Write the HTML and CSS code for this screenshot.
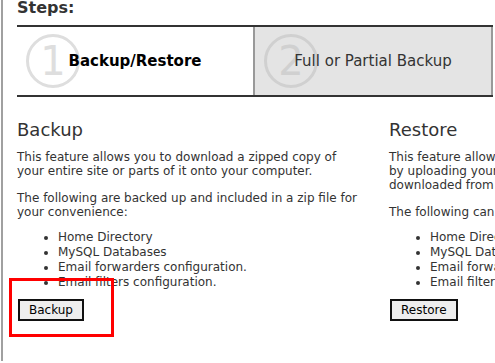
FILE: index.html
```html
<!DOCTYPE html>
<html lang="en">
<head>
    <meta charset="UTF-8">
    <title>Backup Wizard</title>
    <link rel="stylesheet" href="styles.css">
</head>
<body>
<div class="page">
    <h3 class="steps-title">Steps:</h3>

    <div class="steps">
        <div class="step current">
            <svg class="step-num" width="54" height="54" viewBox="0 0 54 54">
                <circle cx="27" cy="27" r="25.5" fill="none" stroke="#dedede" stroke-width="3"/>
                <text x="27" y="41" text-anchor="middle">1</text>
            </svg>
            <span class="step-label">Backup/Restore</span>
        </div>
        <div class="step next">
            <svg class="step-num" width="54" height="54" viewBox="0 0 54 54">
                <circle cx="27" cy="27" r="25.5" fill="none" stroke="#d0d0d0" stroke-width="3"/>
                <text x="27" y="41" text-anchor="middle">2</text>
            </svg>
            <span class="step-label">Full or Partial Backup</span>
        </div>
    </div>

    <div class="columns">
        <div class="col">
            <h2>Backup</h2>
            <p>This feature allows you to download a zipped copy of your entire site or parts of it onto your computer.</p>
            <p>The following are backed up and included in a zip file for your convenience:</p>
            <ul>
                <li>Home Directory</li>
                <li>MySQL Databases</li>
                <li>Email forwarders configuration.</li>
                <li>Email filters configuration.</li>
            </ul>
            <button class="btn">Backup</button>
        </div>
        <div class="col">
            <h2>Restore</h2>
            <p>This feature allows you to restore parts of a backup<br>by uploading your zip file(s) that you have previously<br>downloaded from the backup section.</p>
            <p>The following can be restored from a zip file:</p>
            <ul>
                <li>Home Directory</li>
                <li>MySQL Databases</li>
                <li>Email forwarders configuration.</li>
                <li>Email filters configuration.</li>
            </ul>
            <button class="btn">Restore</button>
        </div>
    </div>

    <div class="highlight"></div>
</div>
</body>
</html>
```

FILE: styles.css
```css
html, body {
    margin: 0;
    overflow: hidden;
    background: #fff;
}
body {
    font-family: "DejaVu Sans", Verdana, sans-serif;
    font-size: 12px;
    color: #333;
}
.page {
    position: relative;
    margin-left: 1px;
    border-left: 2px solid #a0a0a0;
    padding-left: 14px;
    min-height: 363px;
}
.steps-title {
    margin: -2px 0 8px;
    font-size: 16px;
    line-height: 19px;
    font-weight: bold;
    color: #333;
}
.steps {
    display: flex;
    width: 476px;
    border-top: 2px solid #333;
    border-bottom: 2px solid #333;
}
.step {
    position: relative;
    flex: 1;
    height: 68px;
    display: flex;
    align-items: center;
    justify-content: center;
    font-size: 15px;
}
.step.current {
    background: #fff;
    color: #000;
    font-weight: bold;
}
.step.next {
    background: #e4e4e4;
    border-left: 2px solid #999;
    border-right: 2px solid #999;
}
.step-num {
    position: absolute;
    left: 9px;
    top: 7px;
}
.step-num text {
    font-family: "DejaVu Sans", sans-serif;
    font-size: 40px;
    font-weight: normal;
    fill: #dedede;
}
.step.next .step-num text {
    fill: #d0d0d0;
}
.step-label {
    position: relative;
}
.columns {
    display: grid;
    grid-template-columns: 345px 345px;
    column-gap: 27px;
    margin-top: 22px;
}
.col h2 {
    margin: 0 0 10px;
    font-size: 18px;
    font-weight: normal;
    line-height: 21px;
    color: #333;
}
.col p {
    margin: 0 0 13px;
    line-height: 14px;
}
.col ul {
    margin: -2px 0 9px;
    padding-left: 41px;
    line-height: 15px;
}
.btn {
    display: block;
    margin-left: 1px;
    height: 22px;
    padding: 0 9px;
    background: #eee;
    border: 2px solid #111;
    font-family: inherit;
    font-size: 12px;
    color: #000;
}
.highlight {
    position: absolute;
    left: 6px;
    top: 280px;
    width: 99px;
    height: 53px;
    border: 3px solid #f00;
}
```
